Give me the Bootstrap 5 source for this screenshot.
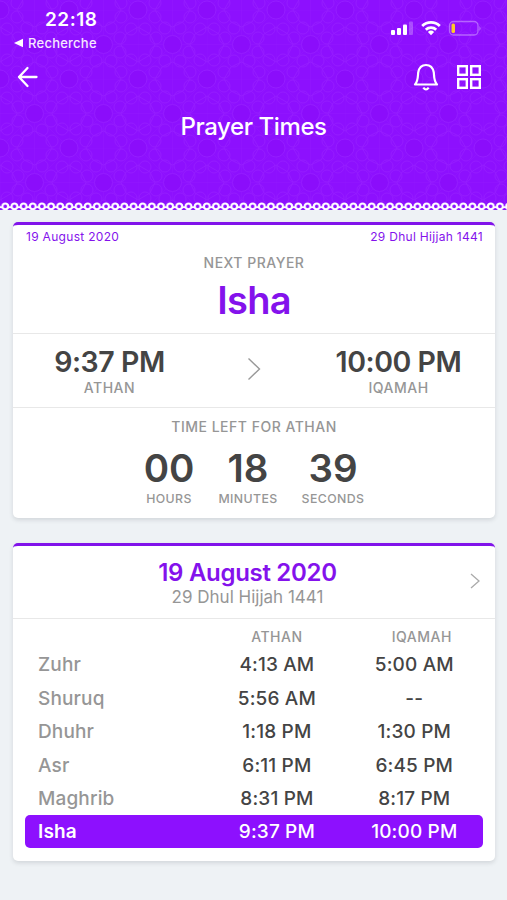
<!DOCTYPE html>
<html lang="en">
<head>
<meta charset="utf-8">
<meta name="viewport" content="width=device-width, initial-scale=1">
<title>Prayer Times</title>
<link href="https://cdn.jsdelivr.net/npm/bootstrap@5.3.0/dist/css/bootstrap.min.css" rel="stylesheet">
<style>
body{font-family:Inter,"Liberation Sans",sans-serif;background:#eef2f5;color:#444;min-height:900px;overflow:hidden}
.hero{height:210px;background:#8d10fe;color:#fff}
.hero-art{inset:0;z-index:0}
.hero-body{z-index:1}
.status{height:54px;padding:9px 25px 0 13px}
.signals{margin-top:10px}
.clock{font-size:19px;font-weight:600;line-height:22px;padding-left:32px;letter-spacing:.5px}
.back-app{font-size:13px;font-weight:500;line-height:16px;margin-top:4px;gap:4px;color:#f6e6ff;letter-spacing:.25px}
.toolbar{height:46px;padding:0 25px 0 17px}
.page-title{font-size:24px;font-weight:500;line-height:30px;margin-top:12px;letter-spacing:-.4px}
.panel{width:482px;border:0;border-radius:5px;overflow:hidden;border-top:3px solid #8113ea;box-shadow:0 2px 4px rgba(60,70,80,.16)}
.panel-next{height:296px;margin:12px 0 0 13px}
.panel-day{height:318px;margin:25px 0 0 13px}
.rule{border-bottom:1px solid #e8e8e8}
.violet{color:#8412ec}
.muted{color:#969696}
.dates{font-size:12px;line-height:16px;padding:4px 12px 0 13px;letter-spacing:.3px}
.cap{font-size:14px;line-height:18px;font-weight:500;letter-spacing:.5px}
.cap-sm{font-size:12.3px;line-height:16px;font-weight:500;letter-spacing:.4px}
.next-label{margin-top:9px}
.next-name{font-size:38px;line-height:46px;font-weight:600;margin-top:5px;letter-spacing:-.7px}
.sec-a{height:109px}.sec-b{height:74px}
.big-time{font-size:28.5px;line-height:34px;font-weight:600;letter-spacing:-.45px}
.side{width:193px}
.go-next{margin-bottom:4px}
.left-label{padding-top:10px}
.count{font-size:38.5px;line-height:46px;font-weight:600}
.counts{gap:24px;margin-top:9px}
.sec-day{height:73px;padding:12px 13px 0 14px}
.day-title{font-size:24px;line-height:30px;font-weight:600;letter-spacing:-.3px}
.day-sub{font-size:17px;line-height:19px}
.go-day{margin-top:14px}
.times{padding:9px 12px 0}
.times-head{height:20px}
.times-head .iq{padding-left:15px}
.prayer{height:33.4px;font-size:19px;font-weight:500;border-radius:5px;letter-spacing:.15px;padding-top:2px}
.w40{width:40%}
.w30{width:30%}
.prayer .name{padding-left:13px;color:#969696}
.prayer.current{background:#8d10fe;color:#fff;padding-top:1px}
.prayer.current .name{color:#fff;font-weight:600}
</style>
<script src="https://cdn.jsdelivr.net/npm/bootstrap@5.3.0/dist/js/bootstrap.bundle.min.js"></script>
</head>
<body>
<header class="hero position-relative">
<svg class="hero-art position-absolute" width="507" height="210" aria-hidden="true">
<defs>
<pattern id="girih" x="0" y="10" width="69" height="69" patternUnits="userSpaceOnUse">
<g fill="#890bf9" stroke="#9a25ff" stroke-width="1">
<g fill="none">
<path d="M0 0L69 69M69 0L0 69M34.5 0V69M0 34.5H69M0 0H69M0 0V69" opacity=".35"/>
<path d="M17 0L24 12L34.500 17L45 12L52 0M17 69L24 57L34.500 52L45 57L52 69M0 17L12 24L17 34.500L12 45L0 52M69 17L57 24L52 34.500L57 45L69 52"/>
</g>
<g><circle cx="0" cy="0" r="9"/><circle cx="69" cy="0" r="9"/><circle cx="0" cy="69" r="9"/><circle cx="69" cy="69" r="9"/><circle cx="34.500" cy="34.500" r="9"/></g>
<g fill="none"><circle cx="17" cy="7" r="6"/><circle cx="52" cy="7" r="6"/><circle cx="17" cy="62" r="6"/><circle cx="52" cy="62" r="6"/><circle cx="7" cy="19" r="6"/><circle cx="62" cy="19" r="6"/><circle cx="7" cy="50" r="6"/><circle cx="62" cy="50" r="6"/><circle cx="27" cy="18" r="6"/><circle cx="42" cy="18" r="6"/><circle cx="27" cy="51" r="6"/><circle cx="42" cy="51" r="6"/><circle cx="18" cy="28" r="6"/><circle cx="51" cy="28" r="6"/><circle cx="18" cy="42" r="6"/><circle cx="51" cy="42" r="6"/></g>
</g>
</pattern>
<pattern id="lace" x="0.700" y="201" width="9.160" height="9" patternUnits="userSpaceOnUse">
<path d="M0 6.200H9.160" stroke="#fff" stroke-width="1.800"/>
<circle cx="4.580" cy="5.400" r="2.900" fill="#8d10fe" stroke="#fff" stroke-width="2.200"/>
</pattern>
</defs>
<rect width="507" height="203" fill="url(#girih)" opacity=".55"/>
<rect y="201" width="507" height="9" fill="url(#lace)"/>
</svg>
<div class="hero-body position-relative">
<div class="status d-flex justify-content-between">
<div>
<div class="clock">22:18</div>
<div class="back-app d-flex align-items-center"><svg width="11" height="10"><path d="M1 5L10 .8V9.200Z" fill="#fff"/></svg><span>Recherche</span></div>
</div>
<svg class="signals" width="92" height="20" aria-hidden="true">
<g fill="#fff"><rect x="1" y="11" width="4" height="5" rx="1"/><rect x="7" y="9" width="4" height="7" rx="1"/><rect x="13" y="5.500" width="4" height="10.500" rx="1"/><rect x="19" y="2.500" width="4" height="13.500" rx="1" opacity=".25"/></g>
<g fill="none" stroke="#fff" stroke-width="2.800"><path d="M32.200 7A12.500 12.500 0 0 1 49.800 7"/><path d="M35.800 10.700A7.600 7.600 0 0 1 46.200 10.700"/></g><path d="M37.900 13A4.500 4.500 0 0 1 44.100 13L41 16.200Z" fill="#fff"/>
<rect x="59.500" y="2.500" width="28.500" height="13.500" rx="4" fill="none" stroke="#fff" stroke-opacity=".35" stroke-width="1.300"/><path d="M89.500 7V12Q91.500 9.500 89.500 7" fill="#fff" opacity=".45"/><rect x="61.500" y="4.500" width="3.500" height="9.500" rx="1.500" fill="#ffc928"/>
</svg>
</div>
<div class="toolbar d-flex justify-content-between align-items-center">
<svg width="22" height="22" fill="none" stroke="#fff" stroke-width="2.300" stroke-linecap="round" stroke-linejoin="round"><path d="M19.500 11H2M10.500 2L2 11L10.500 20"/></svg>
<div class="d-flex align-items-center" style="gap:17px">
<svg width="26" height="28" fill="none" stroke="#fff" stroke-width="2.200" stroke-linejoin="round"><path d="M2 21.500C5 18.500 4.800 14.500 5.200 9.500C6 5 9 2 13 2S20 5 20.800 9.500C21.200 14.500 21 18.500 24 21.500Z"/><path d="M10.300 24.700Q13 28.300 15.700 24.700"/></svg>
<svg width="26" height="26" fill="none" stroke="#fff" stroke-width="2.400"><rect x="2.200" y="2.200" width="8.600" height="8.600"/><rect x="15.200" y="2.200" width="8.600" height="8.600"/><rect x="2.200" y="15.200" width="8.600" height="8.600"/><rect x="15.200" y="15.200" width="8.600" height="8.600"/></svg>
</div>
</div>
<h1 class="page-title text-center mb-0">Prayer Times</h1>
</div>
</header>
<main>
<section class="card panel panel-next">
<div class="sec-a rule">
<div class="dates violet d-flex justify-content-between"><span>19 August 2020</span><span>29 Dhul Hijjah 1441</span></div>
<div class="cap muted text-center next-label">NEXT PRAYER</div>
<div class="next-name violet text-center">Isha</div>
</div>
<div class="sec-b rule d-flex justify-content-between align-items-center">
<div class="side text-center"><div class="big-time">9:37 PM</div><div class="cap muted">ATHAN</div></div>
<svg class="go-next" width="14" height="24" fill="none" stroke="#999" stroke-width="1.400"><path d="M1.500 1.500L12.500 12L1.500 22.500"/></svg>
<div class="side text-center"><div class="big-time">10:00 PM</div><div class="cap muted">IQAMAH</div></div>
</div>
<div class="text-center">
<div class="cap muted left-label">TIME LEFT FOR ATHAN</div>
<div class="counts d-flex justify-content-center">
<div><div class="count">00</div><div class="cap-sm muted">HOURS</div></div>
<div><div class="count">18</div><div class="cap-sm muted">MINUTES</div></div>
<div><div class="count">39</div><div class="cap-sm muted">SECONDS</div></div>
</div>
</div>
</section>
<section class="card panel panel-day">
<div class="sec-day rule d-flex">
<div class="flex-grow-1 text-center"><h2 class="day-title violet mb-0">19 August 2020</h2><div class="day-sub muted">29 Dhul Hijjah 1441</div></div>
<svg class="go-day" width="14" height="18" fill="none" stroke="#aaa" stroke-width="1.300"><path d="M3 2L11 9L3 16"/></svg>
</div>
<div class="times">
<div class="times-head d-flex muted text-center cap"><div class="w40"></div><div class="w30">ATHAN</div><div class="w30 iq">IQAMAH</div></div>
<div class="prayer d-flex align-items-center"><div class="name w40">Zuhr</div><div class="w30 text-center">4:13 AM</div><div class="w30 text-center">5:00 AM</div></div>
<div class="prayer d-flex align-items-center"><div class="name w40">Shuruq</div><div class="w30 text-center">5:56 AM</div><div class="w30 text-center">--</div></div>
<div class="prayer d-flex align-items-center"><div class="name w40">Dhuhr</div><div class="w30 text-center">1:18 PM</div><div class="w30 text-center">1:30 PM</div></div>
<div class="prayer d-flex align-items-center"><div class="name w40">Asr</div><div class="w30 text-center">6:11 PM</div><div class="w30 text-center">6:45 PM</div></div>
<div class="prayer d-flex align-items-center"><div class="name w40">Maghrib</div><div class="w30 text-center">8:31 PM</div><div class="w30 text-center">8:17 PM</div></div>
<div class="prayer current d-flex align-items-center"><div class="name w40">Isha</div><div class="w30 text-center">9:37 PM</div><div class="w30 text-center">10:00 PM</div></div>
</div>
</section>
</main>
</body>
</html>
